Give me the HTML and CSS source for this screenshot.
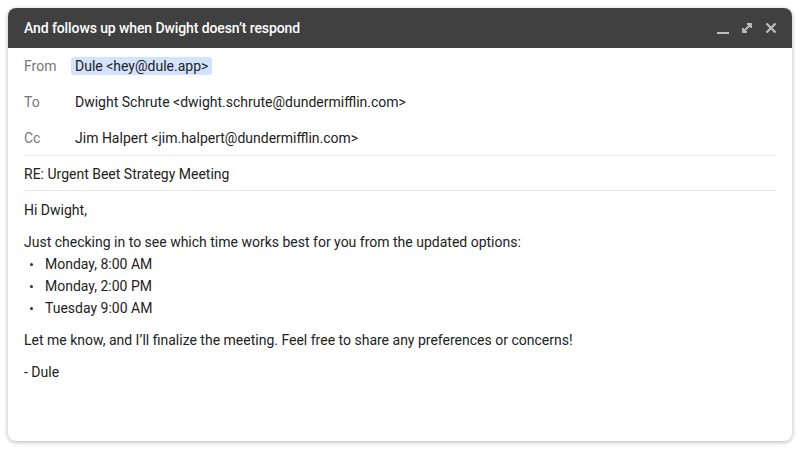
FILE: index.html
```html
<!DOCTYPE html>
<html>
<head>
<meta charset="utf-8">
<link rel="stylesheet" href="styles.css">
</head>
<body>
<div class="card">
  <div class="header">
    <span class="title">And follows up when Dwight doesn’t respond</span>
    <div class="actions">
      <svg class="ic" width="14" height="14" viewBox="0 0 14 14"><path d="M1 12h12" stroke="#bdbdbd" stroke-width="2"/></svg>
      <svg class="ic" width="14" height="14" viewBox="0 0 14 14"><path d="M3 11L11 3M7 3h4v4M3 7v4h4" stroke="#bdbdbd" stroke-width="1.8" fill="none"/></svg>
      <svg class="ic" width="14" height="14" viewBox="0 0 14 14"><path d="M2.5 2.5l9 9M11.5 2.5l-9 9" stroke="#bdbdbd" stroke-width="2.2"/></svg>
    </div>
  </div>
  <div class="fields">
    <div class="row"><span class="label">From</span><span class="value chip">Dule &lt;hey@dule.app&gt;</span></div>
    <div class="row"><span class="label">To</span><span class="value">Dwight Schrute &lt;dwight.schrute@dundermifflin.com&gt;</span></div>
    <div class="row last"><span class="label">Cc</span><span class="value">Jim Halpert &lt;jim.halpert@dundermifflin.com&gt;</span></div>
    <div class="subject">RE: Urgent Beet Strategy Meeting</div>
  </div>
  <div class="body">
    <p>Hi Dwight,</p>
    <p class="tight">Just checking in to see which time works best for you from the updated options:</p>
    <ul>
      <li>Monday, 8:00 AM</li>
      <li>Monday, 2:00 PM</li>
      <li>Tuesday 9:00 AM</li>
    </ul>
    <p>Let me know, and I’ll finalize the meeting. Feel free to share any preferences or concerns!</p>
    <p>- Dule</p>
  </div>
</div>
</body>
</html>
```
FILE: styles.css
```css
* { box-sizing: border-box; }
html, body { margin: 0; padding: 0; background: #fff; }
body {
  font-family: Roboto, "Liberation Sans", sans-serif;
  font-size: 14px;
  color: #222;
  padding: 8px;
}
.card {
  height: 433px;
  border-radius: 8px;
  background: #fff;
  box-shadow: 0 1px 4px rgba(0,0,0,0.22), 0 2px 6px rgba(0,0,0,0.08);
  overflow: hidden;
}
.header {
  height: 40px;
  background: #404040;
  display: flex;
  align-items: center;
  justify-content: space-between;
  padding: 0 14px 0 16px;
}
.title {
  color: #fff;
  font-weight: 500;
  font-size: 14px;
  letter-spacing: -0.1px;
}
.actions {
  display: flex;
  gap: 10px;
  align-items: center;
}
.ic { display: block; }
.fields { padding: 0 16px; }
.row {
  display: flex;
  align-items: center;
  height: 36px;
}
.row.last {
  border-bottom: 1px solid #eaeaea;
}
.label {
  width: 51px;
  color: #777;
}
.chip {
  background: #d3e3fd;
  border-radius: 3px;
  padding: 1px 4px;
  margin-left: -4px;
}
.subject {
  height: 35px;
  display: flex;
  align-items: center;
  padding-top: 2px;
  border-bottom: 1px solid #eaeaea;
}
.body { padding: 8px 16px 0; }
.body p {
  margin: 0 0 10px;
  line-height: 22px;
}
.body p.tight { margin-bottom: 0; }
.body ul {
  list-style: none;
  margin: 0 0 10px;
  padding: 0;
}
.body li {
  line-height: 22px;
  position: relative;
  padding-left: 21px;
}
.body li::before {
  content: "";
  position: absolute;
  left: 6px;
  top: 10px;
  width: 3px;
  height: 3px;
  border-radius: 50%;
  background: #333;
}
```
